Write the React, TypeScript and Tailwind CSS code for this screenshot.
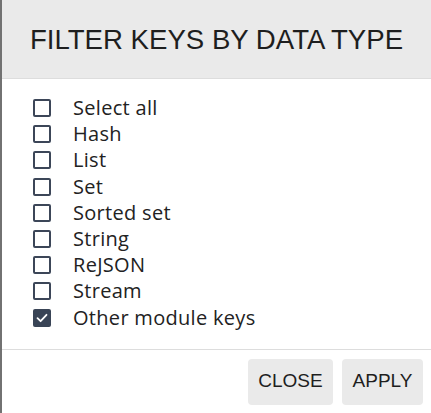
import React from "react";

const items: { label: string; checked: boolean }[] = [
  { label: "Select all", checked: false },
  { label: "Hash", checked: false },
  { label: "List", checked: false },
  { label: "Set", checked: false },
  { label: "Sorted set", checked: false },
  { label: "String", checked: false },
  { label: "ReJSON", checked: false },
  { label: "Stream", checked: false },
  { label: "Other module keys", checked: true },
];

function Box({ checked }: { checked: boolean }) {
  if (checked) {
    return (
      <span className="flex h-[18px] w-[18px] items-center justify-center rounded-[2px] bg-[#394456]">
        <svg width="12" height="12" viewBox="0 0 12 12" fill="none">
          <path d="M1.5 6.2 L4.6 9.2 L10.5 2.8" stroke="white" strokeWidth="1.8" strokeLinecap="round" strokeLinejoin="round" />
        </svg>
      </span>
    );
  }
  return <span className="block h-[18px] w-[18px] rounded-[2px] border-2 border-[#3c4658] bg-white" />;
}

export default function App() {
  return (
    <div className="flex h-[413px] w-[431px] flex-col border-l-2 border-[#727272] bg-white">
      <div className="flex h-[79px] items-center justify-center border-b border-[#dddddd] bg-[#eaeaea]">
        <h1 className="pt-[1px] text-[27.6px] text-[#1e1e1e] [font-family:'Liberation_Sans',Arial,sans-serif]">
          FILTER KEYS BY DATA TYPE
        </h1>
      </div>
      <div className="flex flex-col pl-[31px] pt-[16px] pb-[18px]">
        {items.map((it) => (
          <label key={it.label} className="flex h-[26.2px] items-center gap-[22px]">
            <Box checked={it.checked} />
            <span className="text-[20px] leading-none tracking-[0.3px] text-[#222] [font-family:'Open_Sans',sans-serif]">{it.label}</span>
          </label>
        ))}
      </div>
      <div className="flex flex-1 items-start justify-end gap-[9px] border-t border-[#dddddd] pr-[8px] pt-[9px]">
        <button className="h-[46px] w-[85px] rounded-[4px] bg-[#eaeaea] text-[19px] text-[#1e1e1e] [font-family:'Liberation_Sans',Arial,sans-serif]">
          CLOSE
        </button>
        <button className="h-[46px] w-[81px] rounded-[4px] bg-[#eaeaea] text-[19px] text-[#1e1e1e] [font-family:'Liberation_Sans',Arial,sans-serif]">
          APPLY
        </button>
      </div>
    </div>
  );
}
